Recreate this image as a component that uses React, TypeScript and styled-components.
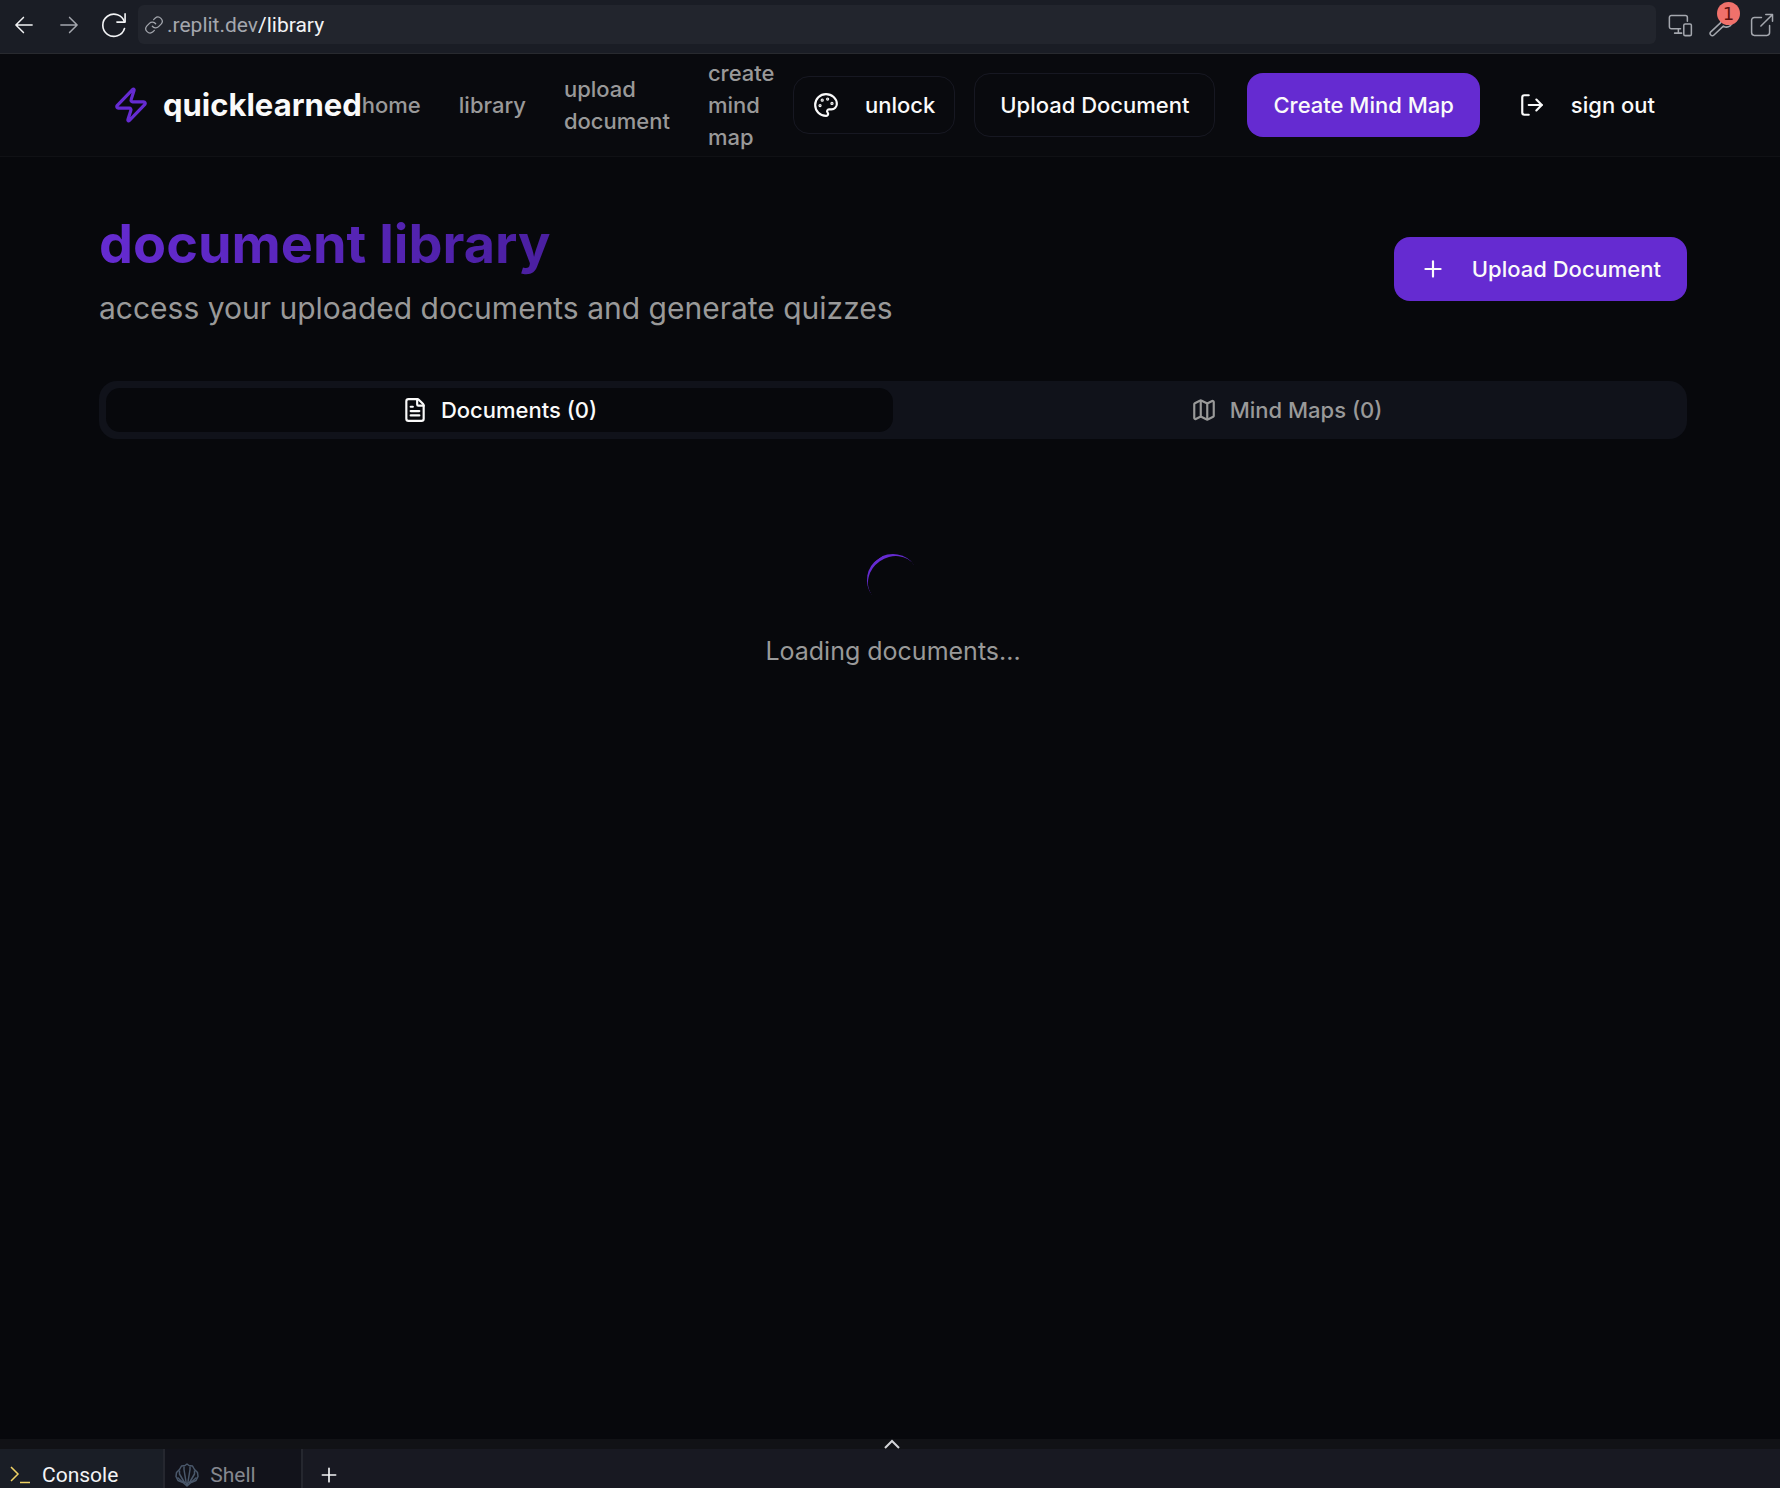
import React, { useState } from "react";
import styled, { createGlobalStyle, keyframes } from "styled-components";
import { FileText, LogOut, Map as MapIcon, Palette, Plus, Zap } from "lucide-react";

const sans = `Inter, "Liberation Sans", sans-serif`;
const chrome = `Roboto, "Liberation Sans", sans-serif`;
const color = {
  page: "#07080c",
  header: "#090a0e",
  line: "#171822",
  faintLine: "#101115",
  text: "#fafafa",
  muted: "#999999",
  accent: "#652bd1",
  accentDark: "#4a1fa0",
  tabList: "#10121a",
};

const GlobalStyle = createGlobalStyle`
  * { box-sizing: border-box; }
  body { margin: 0; background: ${color.page}; color: ${color.text}; font-family: ${sans}; }
  button, input { font: inherit; color: inherit; }
  button { cursor: pointer; border: 0; background: none; padding: 0; }
  a { color: inherit; text-decoration: none; }
  h1, p { margin: 0; }
  svg { display: block; flex: none; }
`;

const Workspace = styled.div`
  display: grid;
  grid-template-rows: auto 1fr auto;
  height: 100vh;
  overflow: hidden;
`;

/* Browser bar */
const BrowserBar = styled.div`
  display: flex;
  align-items: center;
  gap: 10px;
  height: 54px;
  padding: 0 4px 4px 10px;
  background: #1a1d25;
  border-bottom: 1px solid #282a2f;
  font-family: ${chrome};
`;

const BarButton = styled.button<{ $dim?: boolean }>`
  position: relative;
  display: grid;
  place-items: center;
  width: 28px;
  height: 28px;
  color: ${(p) => (p.$dim ? "#a4a7ae" : "#f2f3f5")};
`;

const NavButtons = styled.div`
  display: flex;
  gap: 17px;
`;

const Tools = styled.div`
  display: flex;
  gap: 13px;
`;

const Address = styled.label`
  flex: 1;
  display: flex;
  align-items: center;
  gap: 3px;
  height: 39px;
  padding: 0 6px;
  border-radius: 6px;
  background: #22252d;
  color: #a4a7ae;
  font-size: 21px;
  line-height: 26px;
`;

const Url = styled.span`
  flex: 1;
  display: flex;
`;

const PathInput = styled.input`
  flex: 1;
  min-width: 0;
  padding: 0;
  border: 0;
  outline: 0;
  background: none;
  color: #f2f3f5;
`;

const Badge = styled.span`
  position: absolute;
  top: -9px;
  right: -5px;
  width: 23px;
  height: 23px;
  border-radius: 50%;
  background: #f0716b;
  color: #5e1210;
  font-family: "DejaVu Sans", sans-serif;
  font-size: 18px;
  line-height: 23px;
  text-align: center;
`;

/* Previewed site */
const Site = styled.div`
  min-height: 0;
  overflow: hidden;
`;

const Header = styled.header`
  display: flex;
  align-items: center;
  height: 103px;
  padding: 0 105px 0 112px;
  background: ${color.header};
  border-bottom: 1px solid ${color.faintLine};
  font-size: 22px;
  line-height: 32px;
  font-weight: 500;
`;

const Brand = styled.a`
  display: flex;
  align-items: center;
  gap: 13px;
  font-size: 31px;
  font-weight: 700;
  svg { color: ${color.accent}; }
`;

const Nav = styled.nav`
  display: flex;
  align-items: center;
  gap: 38px;
  color: ${color.muted};
`;

const NavLink = styled.a`
  width: min-content;
`;

const Actions = styled.div`
  display: flex;
  align-items: center;
  gap: 19px;
  margin-left: auto;
`;

const ButtonPair = styled.div`
  display: flex;
  gap: 32px;
`;

const Button = styled.button<{ $kind: "outline" | "solid" | "ghost"; $small?: boolean }>`
  display: flex;
  align-items: center;
  gap: 26px;
  height: ${(p) => (p.$small ? 58 : 64)}px;
  padding: 0 ${(p) => (p.$small ? 19 : 25)}px;
  border: 1px solid ${(p) => (p.$kind === "outline" ? color.line : "transparent")};
  border-radius: 16px;
  background: ${(p) => (p.$kind === "solid" ? color.accent : "transparent")};
  font-size: 22px;
  line-height: 32px;
  font-weight: 500;
  white-space: nowrap;
`;

const Main = styled.main`
  padding: 55px 93px 0 99px;
`;

const TitleRow = styled.div`
  display: flex;
  align-items: center;
  justify-content: space-between;
`;

const Title = styled.h1`
  width: max-content;
  font-size: 54px;
  line-height: 64px;
  font-weight: 700;
  color: transparent;
  background: linear-gradient(90deg, ${color.accent}, ${color.accentDark});
  background-clip: text;
  -webkit-background-clip: text;
`;

const Subtitle = styled.p`
  margin-top: 14px;
  font-size: 30px;
  line-height: 36px;
  color: ${color.muted};
`;

const TabList = styled.div`
  display: grid;
  grid-template-columns: 1fr 1fr;
  height: 58px;
  margin-top: 55px;
  padding: 7px;
  border-radius: 18px;
  background: ${color.tabList};
`;

const Tab = styled.button<{ $active: boolean }>`
  display: flex;
  align-items: center;
  justify-content: center;
  gap: 13px;
  border-radius: 14px;
  font-size: 22px;
  line-height: 32px;
  font-weight: 500;
  color: ${(p) => (p.$active ? color.text : color.muted)};
  background: ${(p) => (p.$active ? color.page : "transparent")};
`;

const Panel = styled.div`
  display: flex;
  flex-direction: column;
  align-items: center;
  gap: 26px;
  padding-top: 115px;
  font-size: 25px;
  line-height: 38px;
  color: ${color.muted};
`;

const turn = keyframes`
  to { rotate: 360deg; }
`;

const Spinner = styled.div`
  width: 52px;
  height: 52px;
  border-radius: 50%;
  border-top: 3px solid ${color.accent};
  transform: rotate(-35deg);
  animation: ${turn} 1s linear infinite paused;
`;

/* Console dock */
const Dock = styled.div`
  font-family: ${chrome};
  font-size: 21px;
  line-height: 26px;
`;

const DockHandle = styled.button`
  display: flex;
  align-items: center;
  justify-content: center;
  width: 100%;
  height: 10px;
  padding-left: 4px;
  background: #111216;
  color: #d3d4d8;
`;

const DockTabs = styled.div`
  display: flex;
  height: 39px;
  background: #181922;
`;

const DockTab = styled.button<{ $active?: boolean }>`
  display: flex;
  align-items: flex-start;
  gap: 10px;
  padding: 13px 45px 0 9px;
  border-right: 2px solid #25272f;
  background: ${(p) => (p.$active ? "#1a1e26" : "#12131b")};
  color: ${(p) => (p.$active ? "#f2f3f5" : "#85878f")};
`;

const AddTab = styled.button`
  display: flex;
  padding: 16px 16px 0;
  color: #f2f3f5;
`;

const ChromeIcon = ({ size = 26, width = 1.4, children }: { size?: number; width?: number; children: React.ReactNode }) => (
  <svg
    width={size}
    height={size}
    viewBox="0 0 24 24"
    fill="none"
    stroke="currentColor"
    strokeWidth={width}
    strokeLinecap="round"
    strokeLinejoin="round"
    aria-hidden="true"
  >
    {children}
  </svg>
);

const navItems = ["home", "library", "upload document", "create mind map"];

export default function App() {
  const [tab, setTab] = useState<"documents" | "maps">("documents");
  const [path, setPath] = useState("/library");

  return (
    <Workspace>
      <GlobalStyle />
      <BrowserBar>
        <NavButtons>
          <BarButton aria-label="Back">
            <ChromeIcon><path d="M4.5 12h15M11.5 5l-7 7 7 7" /></ChromeIcon>
          </BarButton>
          <BarButton aria-label="Forward" $dim>
            <ChromeIcon><path d="M4.5 12h15M12.5 5l7 7-7 7" /></ChromeIcon>
          </BarButton>
          <BarButton aria-label="Reload">
            <ChromeIcon size={28}>
              <path d="M21.5 2.5v7h-7" />
              <path d="M21 9.5A9.5 9.5 0 1 0 21 15" />
            </ChromeIcon>
          </BarButton>
        </NavButtons>
        <Address>
          <ChromeIcon size={20} width={1.5}>
            <path d="M10 13.5a5 5 0 0 0 7.5.5l3-3a5.1 5.1 0 0 0-7.2-7.2l-1.7 1.7" />
            <path d="M14 10.5a5 5 0 0 0-7.5-.5l-3 3a5.1 5.1 0 0 0 7.2 7.2l1.7-1.7" />
          </ChromeIcon>
          <Url>
            .replit.dev
            <PathInput aria-label="Path" value={path} onChange={(e) => setPath(e.target.value)} />
          </Url>
        </Address>
        <Tools>
          <BarButton aria-label="Device sizes" $dim>
            <ChromeIcon>
              <path d="M12.5 15.5H4a1.8 1.8 0 0 1-1.8-1.8V5A1.800 1.800 0 0 1 4 3.200h13A1.800 1.800 0 0 1 18.800 5v3.500" />
              <path d="M10.500 15.500v4M7 19.500h6.500" />
              <rect x="15.500" y="11" width="7" height="10.800" rx="1.300" />
            </ChromeIcon>
          </BarButton>
          <BarButton aria-label="Developer tools, 1 message" $dim>
            <ChromeIcon>
              <path d="M14.2 6.8a5.5 5.5 0 0 1 7.2-4.2l-3.400 3.400 1 1.800 2.200.5 1.300-1.300a5.500 5.500 0 0 1-8.300 6L5.500 21.200a2 2 0 0 1-2.900-2.900L11.500 10a5.500 5.500 0 0 1 2.700-3.200z" />
            </ChromeIcon>
            <Badge>1</Badge>
          </BarButton>
          <BarButton aria-label="Open in new tab" $dim>
            <ChromeIcon>
              <path d="M11.5 5H5a2.600 2.600 0 0 0-2.600 2.600V19A2.600 2.600 0 0 0 5 21.600h11.500A2.600 2.600 0 0 0 19 19v-6.500" />
              <path d="M15.5 2.400h6.200v6.200M21.500 2.600L11 13" />
            </ChromeIcon>
          </BarButton>
        </Tools>
      </BrowserBar>

      <Site>
        <Header>
          <Brand href="#">
            <Zap size={38} strokeWidth={2} />
            quicklearned
          </Brand>
          <Nav>
            {navItems.map((item) => (
              <NavLink key={item} href="#">{item}</NavLink>
            ))}
          </Nav>
          <Actions>
            <Button $kind="outline" $small>
              <Palette size={26} />
              unlock
            </Button>
            <ButtonPair>
              <Button $kind="outline">Upload Document</Button>
              <Button $kind="solid">Create Mind Map</Button>
            </ButtonPair>
            <Button $kind="ghost" $small>
              <LogOut size={26} />
              sign out
            </Button>
          </Actions>
        </Header>

        <Main>
          <TitleRow>
            <div>
              <Title>document library</Title>
              <Subtitle>access your uploaded documents and generate quizzes</Subtitle>
            </div>
            <Button $kind="solid">
              <Plus size={26} />
              Upload Document
            </Button>
          </TitleRow>

          <TabList role="tablist">
            <Tab role="tab" aria-selected={tab === "documents"} $active={tab === "documents"} onClick={() => setTab("documents")}>
              <FileText size={26} />
              Documents (0)
            </Tab>
            <Tab role="tab" aria-selected={tab === "maps"} $active={tab === "maps"} onClick={() => setTab("maps")}>
              <MapIcon size={26} />
              Mind Maps (0)
            </Tab>
          </TabList>

          <Panel role="tabpanel">
            <Spinner />
            <p>Loading documents...</p>
          </Panel>
        </Main>
      </Site>

      <Dock>
        <DockHandle aria-label="Expand panel">
          <svg width="16" height="10" viewBox="0 0 16 10" fill="none" stroke="currentColor" strokeWidth="2">
            <path d="M1 9l7-7 7 7" />
          </svg>
        </DockHandle>
        <DockTabs>
          <DockTab $active>
            <svg width="23" height="26" viewBox="0 0 23 26" fill="none" stroke="#f0d264" strokeWidth="1.5">
              <path d="M2 5l7 7-7 7M11 20.5h10" />
            </svg>
            Console
          </DockTab>
          <DockTab>
            <svg width="26" height="26" viewBox="0 0 26 26" fill="none" stroke="#4a586b" strokeWidth="1.5" strokeLinejoin="round">
              <path d="M9 20.5L4 18.500 2 14.500l.5-4 3-3 2-3.500 3.500-.5L13 2l2 1.500 3.500.5 2 3.500 3 3 .5 4-2 4-5 2-4 3.500z" />
              <path d="M12.5 23L10 7.500V4.500M13.500 23l2.500-15.500V4.500M11 21.500L5.500 12V8.500M15 21.500L20.500 12V8.500M9 20.500l-5.500-5M17 20.500l5.500-5" />
            </svg>
            Shell
          </DockTab>
          <AddTab aria-label="New tab">
            <ChromeIcon size={20} width={2}><path d="M12 4v16M4 12h16" /></ChromeIcon>
          </AddTab>
        </DockTabs>
      </Dock>
    </Workspace>
  );
}
